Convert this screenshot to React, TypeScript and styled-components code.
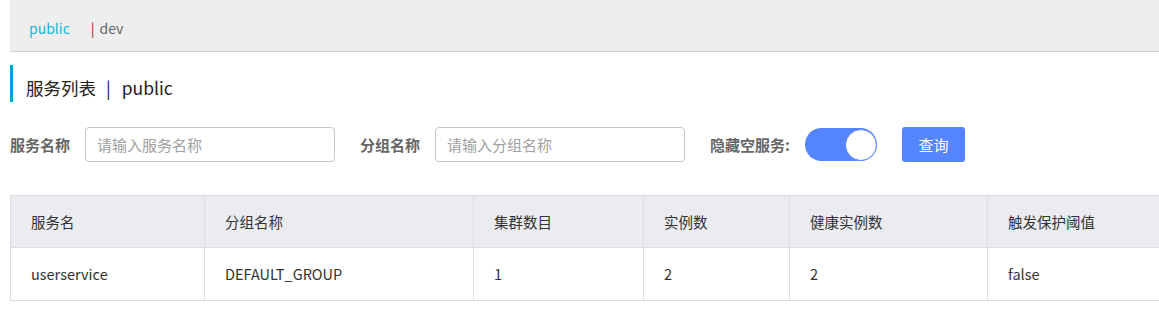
import React from "react";
import styled, { createGlobalStyle } from "styled-components";

const Global = createGlobalStyle`
  html, body { margin: 0; padding: 0; overflow: hidden; background: #fff; }
  body { font-family: "Noto Sans CJK SC", "Liberation Sans", sans-serif; color: #333; }
  * { box-sizing: border-box; }
`;

const Page = styled.div`
  padding: 0 0 0 10px;
  width: 1180px;
`;

const NamespaceBar = styled.div`
  height: 52px;
  background: #eeeeee;
  border-bottom: 1px solid #cfcfcf;
  display: flex;
  align-items: center;
  padding-left: 19px;
  padding-top: 5px;
  font-size: 14px;
`;

const Tab = styled.span<{ $active?: boolean }>`
  color: ${(p) => (p.$active ? "#12b7d9" : "#666")};
  margin-right: ${(p) => (p.$active ? "21px" : "0")};
`;

const Sep = styled.span`
  color: #8a2f22;
  margin-right: 5px;
`;

const Title = styled.div`
  margin-top: 13px;
  height: 37px;
  border-left: 3px solid #0d9fd4;
  padding: 9px 0 0 13px;
  font-size: 17.5px;
  line-height: 28px;
  color: #222;
  display: flex;
`;

const TitleDivider = styled.span`
  margin: 0 11px 0 10px;
`;

const Form = styled.div`
  margin-top: 25px;
  display: flex;
  align-items: center;
  height: 35px;
`;

const Item = styled.div`
  display: flex;
  align-items: center;
  margin-right: 25px;
`;

const Label = styled.label`
  font-size: 15px;
  font-weight: bold;
  color: #666;
  margin-right: 15px;
  white-space: nowrap;
`;

const Input = styled.input`
  width: 250px;
  height: 35px;
  border: 1px solid #c4c6cf;
  border-radius: 4px;
  padding: 0 11px;
  font-size: 15px;
  font-family: inherit;
  color: #333;
  outline: none;
  &::placeholder { color: #a0a0a0; }
`;

const Switch = styled.div<{ $on?: boolean }>`
  width: 72px;
  height: 33px;
  border-radius: 17px;
  background: #5584ff;
  display: flex;
  justify-content: ${(p) => (p.$on ? "flex-end" : "flex-start")};
  align-items: center;
`;

const Knob = styled.div`
  width: 32px;
  height: 32px;
  border-radius: 50%;
  background: #fff;
  border: 1px solid #5584ff;
`;

const Button = styled.button`
  width: 63px;
  height: 35px;
  border: none;
  border-radius: 3px;
  background: #5584ff;
  color: #fff;
  font-size: 15px;
  font-family: inherit;
  padding: 0;
`;

const Table = styled.table`
  margin-top: 33px;
  width: 1170px;
  border-collapse: collapse;
  table-layout: fixed;
  font-size: 14.5px;
`;

const Th = styled.th`
  background: #ebecf0;
  font-weight: normal;
  text-align: left;
  color: #333;
  height: 52px;
  padding: 0 0 0 20px;
  border: 1px solid #dcdee3;
`;

const Td = styled.td`
  height: 53px;
  padding: 0 0 2px 20px;
  border: 1px solid #dcdee3;
  color: #333;
`;

const columns = [
  { title: "服务名", width: 194 },
  { title: "分组名称", width: 269 },
  { title: "集群数目", width: 170 },
  { title: "实例数", width: 146 },
  { title: "健康实例数", width: 198 },
  { title: "触发保护阈值", width: 193 },
];

const rows = [["userservice", "DEFAULT_GROUP", "1", "2", "2", "false"]];

export default function App() {
  return (
    <Page>
      <Global />
      <NamespaceBar>
        <Tab $active>public</Tab>
        <Sep>|</Sep>
        <Tab>dev</Tab>
      </NamespaceBar>
      <Title>
        <span>服务列表</span>
        <TitleDivider>|</TitleDivider>
        <span>public</span>
      </Title>
      <Form>
        <Item>
          <Label>服务名称</Label>
          <Input placeholder="请输入服务名称" />
        </Item>
        <Item>
          <Label>分组名称</Label>
          <Input placeholder="请输入分组名称" />
        </Item>
        <Item>
          <Label>隐藏空服务:</Label>
          <Switch $on>
            <Knob />
          </Switch>
        </Item>
        <Item>
          <Button>查询</Button>
        </Item>
      </Form>
      <Table>
        <colgroup>
          {columns.map((c) => (
            <col key={c.title} style={{ width: c.width }} />
          ))}
        </colgroup>
        <thead>
          <tr>
            {columns.map((c) => (
              <Th key={c.title}>{c.title}</Th>
            ))}
          </tr>
        </thead>
        <tbody>
          {rows.map((r, i) => (
            <tr key={i}>
              {r.map((v, j) => (
                <Td key={j}>{v}</Td>
              ))}
            </tr>
          ))}
        </tbody>
      </Table>
    </Page>
  );
}
